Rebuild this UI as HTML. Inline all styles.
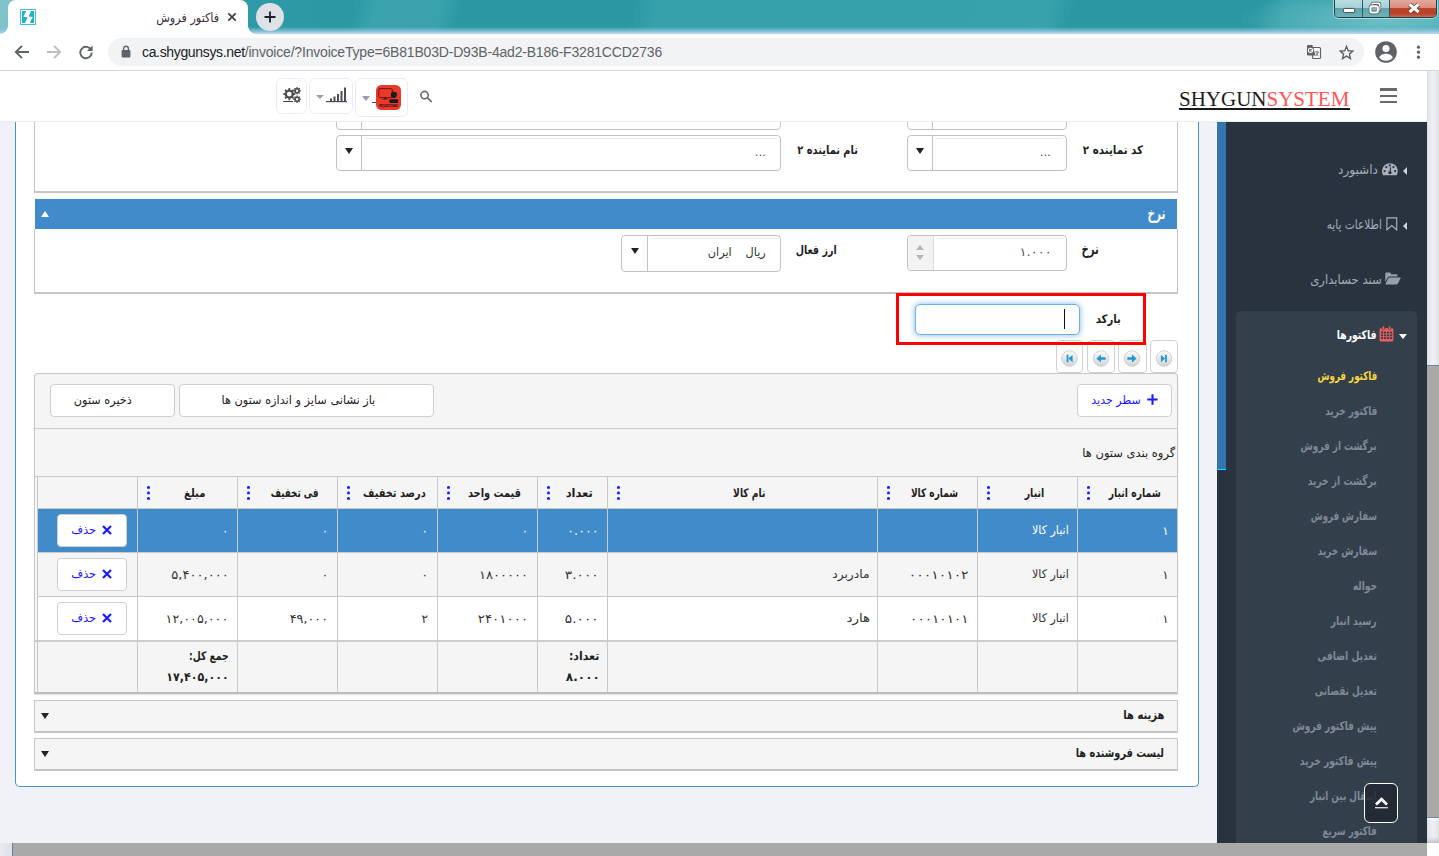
<!DOCTYPE html>
<html lang="fa">
<head>
<meta charset="utf-8">
<title>فاکتور فروش</title>
<style>
*{box-sizing:border-box;margin:0;padding:0}
html,body{width:1439px;height:856px;overflow:hidden;background:#fff}
body{position:relative;font-family:"Liberation Sans","DejaVu Sans",sans-serif;font-size:12px;color:#222}
.abs{position:absolute}
.fa{font-family:"DejaVu Sans","Liberation Sans",sans-serif;direction:rtl;white-space:nowrap;line-height:1}
.fac{font-family:"DejaVu Sans Condensed","DejaVu Sans","Liberation Sans",sans-serif;direction:rtl;white-space:nowrap;line-height:1}
.b{font-weight:bold}

/* ---------- browser chrome ---------- */
#tabstrip{left:0;top:0;width:1439px;height:34px;background:
 linear-gradient(to bottom,rgba(255,255,255,0) 0,rgba(255,255,255,0) 27px,rgba(150,200,225,.75) 31px,rgba(184,214,238,.98) 33.5px),
 radial-gradient(ellipse 150px 30px at 1385px 20px,rgba(150,212,216,.55) 0,rgba(150,212,216,.25) 55%,rgba(150,212,216,0) 100%),
 linear-gradient(104deg,#82c4cb 0,#7fc2c9 12px,#3ea3ad 60px,#2f9ba6 200px,#2b98a3 345px,#3aa3ad 365px,#39a2ac 430px,#2a97a2 450px,#2a97a2 615px,#37a1ab 640px,#38a2ac 1020px,#2a97a2 1045px,#2a97a2 1225px,#39a3ad 1250px,#3ea6b0 1439px);}
#tab{left:8px;top:0;width:240px;height:34px;background:#fff;border-radius:8px 8px 0 0}
#tabl{left:0;top:26px;width:8px;height:8px;background:radial-gradient(circle at 0 0,rgba(255,255,255,0) 7.5px,#fff 8px)}
#tabr{left:248px;top:26px;width:8px;height:8px;background:radial-gradient(circle at 100% 0,rgba(255,255,255,0) 7.5px,#fff 8px)}
#newtab{left:256px;top:3px;width:28px;height:28px;border-radius:50%;background:#dee1e6}
#toolbar{left:0;top:34px;width:1439px;height:36px;background:#fff}
#tbline{left:0;top:70px;width:1439px;height:1px;background:#d5d7dc}
#urlpill{left:108px;top:38px;width:1256px;height:28px;border-radius:14px;background:#f1f3f4}
#url{left:142px;top:43px;font:14px/18px "Liberation Sans",sans-serif;color:#5f6368;white-space:nowrap;letter-spacing:-.193px}
#url b{font-weight:normal;color:#202124;letter-spacing:-.34px}
#wctl{left:1334px;top:0;width:103px;height:18px;border:1px solid #1d4248;border-top:0;border-radius:0 0 5px 5px;overflow:hidden;box-shadow:0 0 0 1px rgba(255,255,255,.45)}
#wctl div{position:absolute;top:0;height:17px}
#wmin{left:0;width:28px;background:linear-gradient(#b9dde0 0,#a5d2d6 45%,#5fa5ac 50%,#6fb2b8 100%);border-right:1px solid #2b5b62}
#wmax{left:28px;width:27px;background:linear-gradient(#b9dde0 0,#a5d2d6 45%,#5fa5ac 50%,#6fb2b8 100%);border-right:1px solid #2b5b62}
#wcls{left:55px;width:47px;background:linear-gradient(#e3a99c 0,#d98e7f 45%,#c0432a 50%,#b8422c 80%,#c96a4f 100%)}

/* ---------- page ---------- */
#page{left:0;top:71px;width:1427px;height:772px;background:#f1f2f7;overflow:hidden}
#hdr{left:0;top:0;width:1427px;height:51px;background:#fff;border-bottom:1px solid #ececf4}
#logo{left:1179px;top:16px;font:21px/24px "Liberation Serif",serif;color:#1b1b1b;white-space:nowrap;letter-spacing:0}
#logo i{font-style:normal;color:#ff5656}
#logou{left:1179px;top:37px;width:171px;height:2px;background:#1b1b1b}
.hbar{left:1380px;width:17px;height:2.5px;background:#6a6a6a}
.tbtn{border:1.3px solid #ebecf9;border-radius:6px;background:#fff}

/* sidebar */
#side{left:1226px;top:51px;width:201px;height:721px;background:#28333f}
#stripe{left:1217px;top:51px;width:9px;height:347px;background:#3276b1}
#stripe2{left:1217px;top:398px;width:9px;height:1.4px;background:#06e4fb}
#stripe3{left:1217px;top:399.4px;width:9px;height:373px;background:#27323e}
#sub{left:10px;top:189px;width:181px;height:540px;background:#343f4c;border-radius:5px 5px 0 0}
.mi{color:#a2abb7;font-size:13px}
.si{color:#7f8997;font-size:12px;font-weight:bold}

/* card */
#card{background:#fff;border:1px solid #4a90d2;border-top:0;border-radius:0 0 5px 5px}
.panel{border:1px solid #c5c5c5;background:#fff}
.combo{border:1px solid #c2c2c2;border-radius:4px;background:#fff}
.combo .dv{position:absolute;top:0;bottom:0;width:1px;background:#c2c2c2}
.tri-d{width:0;height:0;border-left:4px solid transparent;border-right:4px solid transparent;border-top:6px solid #222}
.tri-u{width:0;height:0;border-left:4px solid transparent;border-right:4px solid transparent;border-bottom:6px solid #fff}
.lbl{font-weight:bold;color:#1f1f1f;font-size:12px}
.btn{border:1px solid #cfcfcf;border-radius:4px;background:#fff}
.blue{color:#1a1aff !important}
.hd{font-weight:bold;color:#1f1f1f;font-size:12px}
.cell{font-size:12px;color:#333}
.vl{width:1px;background:#c9c9c9}
.hl{height:1px;background:#c9c9c9}
.dots{width:3px;height:14px;background:radial-gradient(circle at 1.5px 1.5px,#1a1aff 1.2px,rgba(26,26,255,0) 1.65px) 0 0/3px 5.5px repeat-y}
</style>
</head>
<body>

<!-- ================= BROWSER CHROME ================= -->
<div class="abs" id="tabstrip"></div>
<div class="abs" id="tabl"></div><div class="abs" id="tab"></div><div class="abs" id="tabr"></div>
<!-- favicon -->
<svg class="abs" style="left:20px;top:9px" width="16" height="16" viewBox="0 0 16 16"><rect x=".5" y=".5" width="15" height="15" fill="#fff" stroke="#45c0d0"/><rect x="2" y="2" width="12" height="12" fill="#22b0c4"/><path d="M6.2 2 L11 2 L8.6 7.5 L12.8 7.9 L9.8 14 L4.9 14 L7.7 8.4 L3.4 7.7 Z" fill="#fff"/></svg>
<div class="abs fa" id="tabtitle" style="right:1220px;top:10px;font-size:12.5px;line-height:16px;color:#3b2f3f;transform:scaleX(0.8980);transform-origin:100% 50%">فاکتور فروش</div>
<svg class="abs" style="left:227px;top:12px" width="10" height="10" viewBox="0 0 10 10"><path d="M1.3 1.3 L8.7 8.7 M8.7 1.3 L1.3 8.7" stroke="#3c4043" stroke-width="1.7" fill="none"/></svg>
<div class="abs" id="newtab"></div>
<svg class="abs" style="left:264px;top:11px" width="12" height="12" viewBox="0 0 12 12"><path d="M6 .5 V11.5 M.5 6 H11.5" stroke="#202124" stroke-width="1.8" fill="none"/></svg>
<!-- window controls -->
<div class="abs" id="wctl"><div id="wmin"></div><div id="wmax"></div><div id="wcls"></div></div>
<svg class="abs" style="left:1334px;top:0" width="103" height="18" viewBox="0 0 103 18">
 <rect x="9.6" y="8.4" width="11" height="4.2" rx=".8" fill="#fff" stroke="#4a4a5a" stroke-width="1"/>
 <rect x="38.2" y="3.4" width="7.4" height="6.6" rx="1" fill="none" stroke="#4a4a5a" stroke-width="3.2"/><rect x="38.2" y="3.4" width="7.4" height="6.6" rx="1" fill="none" stroke="#fff" stroke-width="1.9"/>
 <rect x="36.5" y="6.3" width="7.2" height="6.2" rx="1" fill="#7fb9bf" stroke="#4a4a5a" stroke-width="3.4"/><rect x="36.5" y="6.3" width="7.2" height="6.2" rx="1" fill="none" stroke="#fff" stroke-width="2.2"/>
 <path d="M75.6 4.4 L84.6 12 M84.6 4.4 L75.6 12" stroke="#5a3a3a" stroke-width="4.6" fill="none"/><path d="M75.6 4.4 L84.6 12 M84.6 4.4 L75.6 12" stroke="#fff" stroke-width="3.1" fill="none"/>
</svg>

<div class="abs" id="toolbar"></div>
<div class="abs" id="tbline"></div>
<!-- nav arrows -->
<svg class="abs" style="left:14px;top:44px" width="16" height="16" viewBox="0 0 16 16"><path d="M15 8 H2.5 M8 1.8 L1.8 8 L8 14.2" stroke="#5f6368" stroke-width="1.9" fill="none"/></svg>
<svg class="abs" style="left:46px;top:44px" width="16" height="16" viewBox="0 0 16 16"><path d="M1 8 H13.5 M8 1.8 L14.2 8 L8 14.2" stroke="#bdbfc2" stroke-width="1.9" fill="none"/></svg>
<svg class="abs" style="left:78px;top:44px" width="16" height="16" viewBox="0 0 16 16"><path d="M13.2 6.2 A5.7 5.7 0 1 0 13.7 8.6" stroke="#5f6368" stroke-width="1.9" fill="none"/><path d="M14.6 1.4 V7 H9 Z" fill="#5f6368"/></svg>
<div class="abs" id="urlpill"></div>
<!-- lock -->
<svg class="abs" style="left:121px;top:45px" width="10" height="13" viewBox="0 0 10 13"><rect x=".6" y="5" width="8.8" height="7.4" rx="1" fill="#5f6368"/><path d="M2.6 5.4 V3.6 A2.4 2.4 0 0 1 7.4 3.6 V5.4" stroke="#5f6368" stroke-width="1.4" fill="none"/></svg>
<div class="abs" id="url"><b>ca.shygunsys.net</b>/invoice/?InvoiceType=6B81B03D-D93B-4ad2-B186-F3281CCD2736</div>
<!-- translate icon -->
<svg class="abs" style="left:1306px;top:44px" width="16" height="16" viewBox="0 0 16 16"><rect x="6.5" y="3.5" width="8" height="11" rx="1" fill="#fff" stroke="#5f6368" stroke-width="1.2"/><path d="M9 8 H13 M11 7 V8 M9.5 12 L12.5 8.2 M10 9.5 L12.6 12" stroke="#5f6368" stroke-width=".9" fill="none"/><path d="M2 1 H6.4 L9.6 11.6 H2 A1 1 0 0 1 1 10.6 V2 A1 1 0 0 1 2 1 Z" fill="#5f6368"/><circle cx="4.5" cy="6.3" r="2.1" fill="none" stroke="#fff" stroke-width="1.1"/><path d="M4.6 6.4 H6.6" stroke="#fff" stroke-width=".9"/></svg>
<!-- star -->
<svg class="abs" style="left:1338.6px;top:44.6px" width="15" height="15" viewBox="0 0 16 16"><path d="M8 1.6 L9.9 6.1 L14.8 6.5 L11.1 9.7 L12.2 14.5 L8 11.9 L3.8 14.5 L4.9 9.7 L1.2 6.5 L6.1 6.1 Z" fill="none" stroke="#5f6368" stroke-width="1.5" stroke-linejoin="miter"/></svg>
<!-- profile -->
<svg class="abs" style="left:1375px;top:41px" width="22" height="22" viewBox="0 0 22 22"><circle cx="11" cy="11" r="10.8" fill="#5f6368"/><circle cx="11" cy="7.6" r="3.5" fill="#fff"/><path d="M4.2 16.6 C5.4 13.6 8.4 12.8 11 12.8 C13.6 12.8 16.6 13.6 17.8 16.6 C16.2 18.7 13.8 19.8 11 19.8 C8.2 19.8 5.8 18.7 4.2 16.6 Z" fill="#fff"/></svg>
<svg class="abs" style="left:1416px;top:45px" width="5" height="15" viewBox="0 0 5 15"><circle cx="2.5" cy="2.2" r="1.6" fill="#5f6368"/><circle cx="2.5" cy="7.2" r="1.6" fill="#5f6368"/><circle cx="2.5" cy="12.2" r="1.6" fill="#5f6368"/></svg>

<!-- ================= PAGE ================= -->
<div class="abs" id="page">
<!-- ============ main content (coords: x=X, y=Y-122) ============ -->
<div class="abs" id="content" style="left:0;top:51px;width:1217px;height:721px;overflow:hidden">
 <div class="abs" id="card" style="left:15px;top:-10px;width:1184px;height:675px"></div>

 <!-- panel 1 (scrolled, partially visible) -->
 <div class="abs panel" id="p1" style="left:34px;top:-20px;width:1144px;height:91px;border-bottom:2px solid #c6c6c6"></div>
 <div class="abs combo" style="left:907px;top:-20px;width:160px;height:28px"><div class="dv" style="left:24px"></div></div>
 <div class="abs combo" style="left:336px;top:-20px;width:445px;height:28px"><div class="dv" style="left:24px"></div></div>
 <div class="abs combo" id="cb1" style="left:907px;top:13px;width:160px;height:36px"><div class="dv" style="left:24px"></div><div class="abs tri-d" style="left:8px;top:12px"></div><div class="abs" style="left:28px;top:2px;right:3px;height:1px;background:#ececec"></div></div>
 <div class="abs combo" id="cb2" style="left:336px;top:13px;width:445px;height:36px"><div class="dv" style="left:24px"></div><div class="abs tri-d" style="left:8px;top:12px"></div><div class="abs" style="left:28px;top:2px;right:3px;height:1px;background:#ececec"></div></div>
 <div class="abs" id="d1" style="left:1040px;top:23px;font:12px/14px 'Liberation Sans',sans-serif;color:#444;letter-spacing:.3px">...</div>
 <div class="abs" id="d2" style="left:755px;top:23px;font:12px/14px 'Liberation Sans',sans-serif;color:#444;letter-spacing:.3px">...</div>
 <div class="abs fa lbl" id="L1" style="right:74px;top:22px;transform:scaleX(0.8605);transform-origin:100% 50%">کد نماینده ۲</div>
 <div class="abs fa lbl" id="L2" style="right:359px;top:22px;transform:scaleX(0.8206);transform-origin:100% 50%">نام نماینده ۲</div>

 <!-- panel 2 : rate -->
 <div class="abs" id="bh" style="left:35px;top:77px;width:1142px;height:30px;background:#428bca"></div>
 <div class="abs tri-u" style="left:41px;top:89px"></div>
 <div class="abs fa b" id="L3" style="right:52px;top:84px;font-size:16px;color:#fff;transform:scaleX(0.6545);transform-origin:100% 50%">نرخ</div>
 <div class="abs panel" id="p2" style="left:34px;top:107px;width:1144px;height:65px;border-top:0;border-bottom:2px solid #c6c6c6"></div>
 <div class="abs combo" id="num" style="left:907px;top:113px;width:160px;height:36px;overflow:hidden"><div class="abs" style="left:0;top:0;width:25px;height:34px;background:#f3f3f3"></div><div class="dv" style="left:25px;background:#dcdcdc"></div>
   <div class="abs" style="left:8px;top:9px;width:0;height:0;border-left:4px solid transparent;border-right:4px solid transparent;border-bottom:5px solid #b5b5b5"></div>
   <div class="abs" style="left:8px;top:19px;width:0;height:0;border-left:4px solid transparent;border-right:4px solid transparent;border-top:5px solid #b5b5b5"></div>
   <div class="abs" style="left:29px;top:2px;right:3px;height:1px;background:#ececec"></div></div>
 <div class="abs fa cell" id="T1" style="right:165px;top:124px;color:#555;transform:scaleX(1.0807);transform-origin:100% 50%">۱.۰۰۰</div>
 <div class="abs fa lbl" id="L4" style="right:118px;top:120px;font-size:15px;transform:scaleX(0.6672);transform-origin:100% 50%">نرخ</div>
 <div class="abs fa lbl" id="L5" style="right:380px;top:122px;transform:scaleX(0.7937);transform-origin:100% 50%">ارز فعال</div>
 <div class="abs combo" id="cb3" style="left:621px;top:113px;width:160px;height:37px"><div class="dv" style="left:25px"></div><div class="abs tri-d" style="left:9px;top:12px"></div><div class="abs" style="left:30px;top:2px;right:3px;height:1px;background:#ececec"></div></div>
 <div class="abs fa cell" id="T2" style="right:451px;top:124px;color:#333;word-spacing:11px;transform:scaleX(0.9390);transform-origin:100% 50%">ریال  ایران</div>

 <!-- nav buttons (under red box) -->
 <div class="abs btn" style="left:1056px;top:218px;width:27px;height:33px;border-color:#d2d2d2"></div>
 <div class="abs btn" style="left:1087px;top:218px;width:28px;height:33px;border-color:#d2d2d2"></div>
 <div class="abs btn" style="left:1118px;top:218px;width:29px;height:33px;border-color:#d2d2d2"></div>
 <div class="abs btn" style="left:1150px;top:218px;width:28px;height:33px;border-color:#d2d2d2"></div>
 <svg class="abs" style="left:1061px;top:228px" width="112" height="17" viewBox="0 0 112 17">
  <defs><linearGradient id="cg" x1="0" y1="0" x2="0" y2="1"><stop offset="0" stop-color="#fbfbfb"/><stop offset="1" stop-color="#d4d4d4"/></linearGradient></defs>
  <g stroke="#c8c8c8" stroke-width=".8" fill="url(#cg)"><circle cx="8.5" cy="8.5" r="7.8"/><circle cx="40" cy="8.5" r="7.8"/><circle cx="71" cy="8.5" r="7.8"/><circle cx="103" cy="8.5" r="7.8"/></g>
  <g fill="#1e9ad6"><path d="M5.6 4.8 H7.4 V12.2 H5.6 Z M7.4 8.5 L11.6 4.8 V12.2 Z"/>
   <path d="M35.4 8.5 L40 4.4 V7.2 H44.6 V9.8 H40 V12.6 Z"/>
   <path d="M75.6 8.5 L71 4.4 V7.2 H66.4 V9.8 H71 V12.6 Z"/>
   <path d="M105.9 4.8 H104.1 V12.2 H105.9 Z M104.1 8.5 L99.9 4.8 V12.2 Z"/></g>
 </svg>
 <!-- barcode -->
 <div class="abs" id="redbox" style="left:896px;top:171px;width:250px;height:52px;border:3px solid #f00;background:transparent"></div>
 <div class="abs" id="bc" style="left:915px;top:182px;width:165px;height:31px;border:1px solid #6fb1e6;border-radius:5px;background:#fff;box-shadow:0 0 5px 1px rgba(102,175,233,.65)"></div>
 <div class="abs" style="left:1064px;top:187px;width:1px;height:20px;background:#111"></div>
 <div class="abs fa lbl" id="L6" style="right:96px;top:191px;transform:scaleX(0.8410);transform-origin:100% 50%">بارکد</div>

 <!-- ============ grid ============ -->
 <div class="abs" id="grid" style="left:34px;top:251px;width:1144px;height:321px;background:#f5f5f5;border:1px solid #c7c7c7;border-bottom:2px solid #bdbdbd;border-radius:4px 4px 0 0;box-shadow:0 1px 1px rgba(0,0,0,.12)"></div>
 <!-- toolbar buttons -->
 <div class="abs btn" id="gb1" style="left:50px;top:262px;width:125px;height:33px"></div>
 <div class="abs btn" id="gb2" style="left:179px;top:262px;width:255px;height:33px"></div>
 <div class="abs btn" id="gb3" style="left:1077px;top:262px;width:95px;height:33px"></div>
 <div class="abs fa cell" id="G1" style="right:1085px;top:272px;color:#222;transform:scaleX(0.9386);transform-origin:100% 50%">ذخیره ستون</div>
 <div class="abs fa cell" id="G2" style="right:842px;top:272px;color:#222;transform:scaleX(0.9415);transform-origin:100% 50%">باز نشانی سایز و اندازه ستون ها</div>
 <div class="abs fa cell blue" id="G3" style="right:76px;top:272px;transform:scaleX(0.9199);transform-origin:100% 50%">سطر جدید</div>
 <svg class="abs" style="left:1147px;top:272px" width="11" height="11" viewBox="0 0 11 11"><path d="M5.5 .3 V10.7 M.3 5.5 H10.7" stroke="#1a1aff" stroke-width="2.1"/></svg>
 <div class="abs hl" style="left:35px;top:306px;width:1142px"></div>
 <div class="abs fa cell" id="G4" style="right:42px;top:325px;color:#222;transform:scaleX(0.9559);transform-origin:100% 50%">گروه بندی ستون ها</div>
 <div class="abs hl" style="left:35px;top:354px;width:1142px"></div>
 <div class="abs" style="left:38px;top:387px;width:1139px;height:43px;background:#428bca"></div>
 <div class="abs" style="left:38px;top:431px;width:1139px;height:43px;background:#f5f5f5"></div>
 <div class="abs" style="left:38px;top:475px;width:1139px;height:43px;background:#fff"></div>
 <div class="abs" style="left:38px;top:520px;width:1139px;height:50px;background:#f5f5f5"></div>
 <div class="abs hl" style="left:38px;top:386px;width:1139px"></div>
 <div class="abs hl" style="left:38px;top:430px;width:1139px"></div>
 <div class="abs hl" style="left:38px;top:474px;width:1139px"></div>
 <div class="abs hl" style="left:35px;top:518px;width:1143px;height:2px;background:#cdcdcd"></div>
 <div class="abs vl" style="left:37px;top:355px;height:215px"></div>
 <div class="abs vl" style="left:137px;top:355px;height:215px"></div>
 <div class="abs vl" style="left:237px;top:355px;height:215px"></div>
 <div class="abs vl" style="left:337px;top:355px;height:215px"></div>
 <div class="abs vl" style="left:437px;top:355px;height:215px"></div>
 <div class="abs vl" style="left:537px;top:355px;height:215px"></div>
 <div class="abs vl" style="left:607px;top:355px;height:215px"></div>
 <div class="abs vl" style="left:877px;top:355px;height:215px"></div>
 <div class="abs vl" style="left:977px;top:355px;height:215px"></div>
 <div class="abs vl" style="left:1077px;top:355px;height:215px"></div>
 <div class="abs dots" style="left:1086.6px;top:364px"></div>
 <div class="abs fa hd" id="H9" style="top:365px;left:1100.8px;transform:scaleX(0.7709);transform-origin:50% 50%">شماره انبار</div>
 <div class="abs dots" style="left:986.6px;top:364px"></div>
 <div class="abs fa hd" id="H8" style="top:365px;left:1022.0px;transform:scaleX(0.7820);transform-origin:50% 50%">انبار</div>
 <div class="abs dots" style="left:886.6px;top:364px"></div>
 <div class="abs fa hd" id="H7" style="top:365px;left:903.0px;transform:scaleX(0.7482);transform-origin:50% 50%">شماره کالا</div>
 <div class="abs dots" style="left:616.6px;top:364px"></div>
 <div class="abs fa hd" id="H6" style="top:365px;left:728.3px;transform:scaleX(0.7593);transform-origin:50% 50%">نام کالا</div>
 <div class="abs dots" style="left:546.6px;top:364px"></div>
 <div class="abs fa hd" id="H5" style="top:365px;left:565.3px;transform:scaleX(0.9549);transform-origin:50% 50%">تعداد</div>
 <div class="abs dots" style="left:446.6px;top:364px"></div>
 <div class="abs fa hd" id="H4" style="top:365px;left:462.1px;transform:scaleX(0.8173);transform-origin:50% 50%">قیمت واحد</div>
 <div class="abs dots" style="left:346.6px;top:364px"></div>
 <div class="abs fa hd" id="H3" style="top:365px;left:356.1px;transform:scaleX(0.8168);transform-origin:50% 50%">درصد تخفیف</div>
 <div class="abs dots" style="left:246.6px;top:364px"></div>
 <div class="abs fa hd" id="H2" style="top:365px;left:261.9px;transform:scaleX(0.7321);transform-origin:50% 50%">فی تخفیف</div>
 <div class="abs dots" style="left:146.6px;top:364px"></div>
 <div class="abs fa hd" id="H1" style="top:365px;left:181.8px;transform:scaleX(0.8413);transform-origin:50% 50%">مبلغ</div>
 <div class="abs fa cell" id="R0C9" style="right:48.2px;top:403px;color:#fff">۱</div>
 <div class="abs fa cell" id="R0C8" style="right:148.4px;top:402px;color:#fff;transform:scaleX(0.9251);transform-origin:100% 50%">انبار کالا</div>
 <div class="abs fa cell" id="R0C5" style="right:618.3px;top:403px;color:#fff;transform:scaleX(1.0571);transform-origin:100% 50%">۰.۰۰۰</div>
 <div class="abs fa cell" id="R0C4" style="right:688.8px;top:403px;color:#fff">۰</div>
 <div class="abs fa cell" id="R0C3" style="right:789.0px;top:403px;color:#fff">۰</div>
 <div class="abs fa cell" id="R0C2" style="right:888.7px;top:403px;color:#fff">۰</div>
 <div class="abs fa cell" id="R0C1" style="right:988.5px;top:403px;color:#fff">۰</div>
 <div class="abs btn" style="left:57px;top:392px;width:70px;height:33px"></div>
 <div class="abs fa cell blue" id="D0" style="right:1120.5px;top:402px;transform:scaleX(0.9481);transform-origin:100% 50%">حذف</div>
 <svg class="abs" style="left:102px;top:403px" width="10" height="10" viewBox="0 0 10 10"><path d="M1 1 L9 9 M9 1 L1 9" stroke="#1a1aff" stroke-width="2.2"/></svg>
 <div class="abs fa cell" id="R1C9" style="right:48.2px;top:447px;color:#333">۱</div>
 <div class="abs fa cell" id="R1C8" style="right:148.4px;top:446px;color:#333;transform:scaleX(0.9251);transform-origin:100% 50%">انبار کالا</div>
 <div class="abs fa cell" id="R1C7" style="right:248.3px;top:447px;color:#333;transform:scaleX(1.1578);transform-origin:100% 50%">۰۰۰۱۰۱۰۲</div>
 <div class="abs fa cell" id="R1C6" style="right:347.0px;top:446px;color:#333;transform:scaleX(1.0210);transform-origin:100% 50%">مادربرد</div>
 <div class="abs fa cell" id="R1C5" style="right:618.3px;top:447px;color:#333;transform:scaleX(1.1415);transform-origin:100% 50%">۳.۰۰۰</div>
 <div class="abs fa cell" id="R1C4" style="right:688.8px;top:447px;color:#333;transform:scaleX(1.0903);transform-origin:100% 50%">۱۸۰۰۰۰۰</div>
 <div class="abs fa cell" id="R1C3" style="right:789.0px;top:447px;color:#333">۰</div>
 <div class="abs fa cell" id="R1C2" style="right:888.7px;top:447px;color:#333">۰</div>
 <div class="abs fa cell" id="R1C1" style="right:988.5px;top:447px;color:#333;transform:scaleX(1.0900);transform-origin:100% 50%">۵,۴۰۰,۰۰۰</div>
 <div class="abs btn" style="left:57px;top:436px;width:70px;height:33px"></div>
 <div class="abs fa cell blue" id="D1" style="right:1120.5px;top:446px;transform:scaleX(0.9481);transform-origin:100% 50%">حذف</div>
 <svg class="abs" style="left:102px;top:447px" width="10" height="10" viewBox="0 0 10 10"><path d="M1 1 L9 9 M9 1 L1 9" stroke="#1a1aff" stroke-width="2.2"/></svg>
 <div class="abs fa cell" id="R2C9" style="right:48.2px;top:491px;color:#333">۱</div>
 <div class="abs fa cell" id="R2C8" style="right:148.4px;top:490px;color:#333;transform:scaleX(0.9251);transform-origin:100% 50%">انبار کالا</div>
 <div class="abs fa cell" id="R2C7" style="right:248.3px;top:491px;color:#333;transform:scaleX(1.1345);transform-origin:100% 50%">۰۰۰۱۰۱۰۱</div>
 <div class="abs fa cell" id="R2C6" style="right:347.0px;top:490px;color:#333;transform:scaleX(1.1172);transform-origin:100% 50%">هارد</div>
 <div class="abs fa cell" id="R2C5" style="right:618.3px;top:491px;color:#333;transform:scaleX(1.1415);transform-origin:100% 50%">۵.۰۰۰</div>
 <div class="abs fa cell" id="R2C4" style="right:688.8px;top:491px;color:#333;transform:scaleX(1.1169);transform-origin:100% 50%">۲۴۰۱۰۰۰</div>
 <div class="abs fa cell" id="R2C3" style="right:789.0px;top:491px;color:#333">۲</div>
 <div class="abs fa cell" id="R2C2" style="right:888.7px;top:491px;color:#333;transform:scaleX(1.0653);transform-origin:100% 50%">۴۹,۰۰۰</div>
 <div class="abs fa cell" id="R2C1" style="right:988.5px;top:491px;color:#333;transform:scaleX(1.0574);transform-origin:100% 50%">۱۲,۰۰۵,۰۰۰</div>
 <div class="abs btn" style="left:57px;top:480px;width:70px;height:33px"></div>
 <div class="abs fa cell blue" id="D2" style="right:1120.5px;top:490px;transform:scaleX(0.9481);transform-origin:100% 50%">حذف</div>
 <svg class="abs" style="left:102px;top:491px" width="10" height="10" viewBox="0 0 10 10"><path d="M1 1 L9 9 M9 1 L1 9" stroke="#1a1aff" stroke-width="2.2"/></svg>
 <div class="abs fa hd" id="F1" style="right:617.4px;top:528px;transform:scaleX(0.9134);transform-origin:100% 50%">تعداد:</div>
 <div class="abs fa hd" id="F2" style="right:617.4px;top:549px;transform:scaleX(1.0042);transform-origin:100% 50%">۸.۰۰۰</div>
 <div class="abs fa hd" id="F3" style="right:988.5px;top:528px;transform:scaleX(0.7661);transform-origin:100% 50%">جمع کل:</div>
 <div class="abs fa hd" id="F4" style="right:988.5px;top:549px;transform:scaleX(0.9229);transform-origin:100% 50%">۱۷,۴۰۵,۰۰۰</div>
 <!-- collapsible sections -->
 <div class="abs" id="sec1" style="left:34px;top:578px;width:1144px;height:33px;background:#f5f5f5;border:1px solid #c7c7c7;border-bottom:2px solid #c4c4c4"></div>
 <div class="abs tri-d" style="left:41px;top:591px"></div>
 <div class="abs fa lbl" id="S1" style="right:53px;top:587px;transform:scaleX(0.8346);transform-origin:100% 50%">هزینه ها</div>
 <div class="abs" id="sec2" style="left:34px;top:616px;width:1144px;height:33px;background:#f5f5f5;border:1px solid #c7c7c7;border-bottom:2px solid #c4c4c4"></div>
 <div class="abs tri-d" style="left:41px;top:629px"></div>
 <div class="abs fa lbl" id="S2" style="right:53px;top:625px;transform:scaleX(0.8101);transform-origin:100% 50%">لیست فروشنده ها</div>
</div>

<!-- header -->
<div class="abs" id="hdr"></div>
<div class="abs" id="logo">SHYGUN<i>SYSTEM</i></div>
<div class="abs" id="logou"></div>
<div class="abs hbar" style="top:17.4px"></div><div class="abs hbar" style="top:23.6px"></div><div class="abs hbar" style="top:29.7px"></div>
<!-- header toolbar buttons -->
<div class="abs tbtn" id="tb1" style="left:276px;top:7px;width:31px;height:36px"></div>
<div class="abs tbtn" id="tb2" style="left:309px;top:7px;width:44px;height:36px"></div>
<div class="abs tbtn" id="tb3" style="left:355px;top:7px;width:53px;height:39px"></div>
<!-- cogs icon -->
<svg class="abs" id="cogs" style="left:282px;top:15.8px" width="19" height="17" viewBox="0 0 19 17">
 <g fill="#4d4d4d">
  <path d="M6.6 1 L8 1 L8.4 2.7 L9.6 3.2 L11.1 2.3 L12.1 3.3 L11.2 4.8 L11.7 6 L13.4 6.4 L13.4 7.8 L11.7 8.2 L11.2 9.4 L12.1 10.9 L11.1 11.9 L9.6 11 L8.4 11.5 L8 13.2 L6.6 13.2 L6.2 11.5 L5 11 L3.5 11.9 L2.5 10.9 L3.4 9.4 L2.9 8.2 L1.2 7.8 L1.2 6.4 L2.9 6 L3.4 4.8 L2.5 3.3 L3.5 2.3 L5 3.2 L6.2 2.7 Z M7.3 4.7 A2.4 2.4 0 1 0 7.3 9.5 A2.4 2.4 0 1 0 7.3 4.7 Z" fill-rule="evenodd"/>
  <path d="M14.6 0 L15.6 0 L15.8 1 L16.5 1.3 L17.4 .8 L18.1 1.5 L17.6 2.4 L17.9 3.1 L18.9 3.3 L18.9 4.3 L17.9 4.5 L17.6 5.2 L18.1 6.1 L17.4 6.8 L16.5 6.3 L15.8 6.6 L15.6 7.6 L14.6 7.6 L14.4 6.6 L13.7 6.3 L12.8 6.8 L12.1 6.1 L12.6 5.2 L12.3 4.5 L11.3 4.3 L11.3 3.3 L12.3 3.1 L12.6 2.4 L12.1 1.5 L12.8 .8 L13.7 1.3 L14.4 1 Z M15.1 2.6 A1.2 1.2 0 1 0 15.1 5 A1.2 1.2 0 1 0 15.1 2.6 Z" fill-rule="evenodd"/>
  <path d="M14.6 8.4 L15.6 8.4 L15.8 9.4 L16.5 9.7 L17.4 9.2 L18.1 9.9 L17.6 10.8 L17.9 11.5 L18.9 11.7 L18.9 12.7 L17.9 12.9 L17.6 13.6 L18.1 14.5 L17.4 15.2 L16.5 14.7 L15.8 15 L15.6 16 L14.6 16 L14.4 15 L13.7 14.7 L12.8 15.2 L12.1 14.5 L12.6 13.6 L12.3 12.9 L11.3 12.7 L11.3 11.7 L12.3 11.5 L12.6 10.8 L12.1 9.9 L12.8 9.2 L13.7 9.7 L14.4 9.4 Z M15.1 11 A1.2 1.2 0 1 0 15.1 13.4 A1.2 1.2 0 1 0 15.1 11 Z" fill-rule="evenodd"/>
  <rect x="1.2" y="14" width="9.7" height="1" fill="#3a3a3a"/>
 </g>
</svg>
<!-- signal icon + caret -->
<div class="abs" style="left:316px;top:23.7px;width:0;height:0;border-left:4px solid transparent;border-right:4px solid transparent;border-top:4.5px solid #9a9cb4"></div>
<svg class="abs" id="sig" style="left:326px;top:16px" width="21" height="16" viewBox="0 0 21 16"><g fill="#4d4d5a"><rect x="4" y="11.5" width="2" height="2.5"/><rect x="7.5" y="9.5" width="2" height="4.5"/><rect x="11" y="7" width="2" height="7"/><rect x="14.5" y="4" width="2" height="10"/><rect x="18" y=".5" width="2" height="13.5"/><rect x="0" y="14" width="21" height="1.2"/></g></svg>
<!-- user button -->
<div class="abs" style="left:362px;top:25px;width:0;height:0;border-left:4px solid transparent;border-right:4px solid transparent;border-top:5px solid #9a9cb4"></div>
<div class="abs" style="left:372px;top:31px;width:6px;height:1px;background:#444"></div>
<svg class="abs" id="usr" style="left:376px;top:14px" width="25" height="25" viewBox="0 0 25 25"><rect width="25" height="25" rx="5.5" fill="#ea382b"/><rect x="2.7" y="3.6" width="13.6" height="9" rx="1.2" fill="none" stroke="#4a120e" stroke-width=".8"/><path d="M6.2 14.4 H11.8" stroke="#4a120e" stroke-width=".5"/><rect x="8" y="12.8" width="2.4" height="1.1" fill="#1a1a1a"/><circle cx="17.9" cy="9.8" r="3.1" fill="#1c1a1c"/><rect x="13.3" y="14.2" width="8.8" height="3.7" rx="1" fill="#1c1a1c"/><text x="12.6" y="21.9" font-family="Liberation Sans, sans-serif" font-weight="bold" font-size="2.7" text-anchor="middle" textLength="19" fill="#3a0d0a">REQUEST DEMO</text></svg>
<!-- search -->
<svg class="abs" id="srch" style="left:419.2px;top:19px" width="14" height="14" viewBox="0 0 14 14"><circle cx="5.6" cy="5.1" r="3.7" fill="none" stroke="#70707a" stroke-width="1.7"/><path d="M8.4 7.9 L12.2 11.4" stroke="#70707a" stroke-width="1.9" stroke-linecap="round"/></svg>

<!-- ============ sidebar ============ -->
<div class="abs" id="stripe"></div><div class="abs" id="stripe2"></div><div class="abs" id="stripe3"></div>
<div class="abs" id="side">
 <div class="abs" id="sub"></div>
 <!-- coordinates inside #side: x = X-1226, y = Y-122 -->
 <!-- dashboard -->
 <div class="abs" style="left:177px;top:45px;width:0;height:0;border-top:4px solid transparent;border-bottom:4px solid transparent;border-right:4.4px solid #cfd2d6"></div>
 <svg class="abs" style="left:155.8px;top:40.9px" width="16" height="13" viewBox="0 0 16 13"><path d="M1.2 12.3 A7.9 7.9 0 1 1 14.6 12.3 Z" fill="#a9b1bd"/><g fill="#28333f"><circle cx="2.6" cy="8.1" r="1.1"/><circle cx="4.3" cy="4.1" r="1.1"/><circle cx="7.8" cy="2.4" r="1.1"/><circle cx="11.4" cy="4.1" r="1.1"/><circle cx="13.2" cy="8.1" r="1.1"/><circle cx="7.9" cy="9.6" r="1.7"/><path d="M7.5 9.4 L8.1 4.3 L9.1 4.4 L8.7 9.6 Z"/></g></svg>
 <div class="abs fa mi" id="m1" style="right:49px;top:41px;transform:scaleX(0.9302);transform-origin:100% 50%">داشبورد</div>
 <!-- base info -->
 <div class="abs" style="left:177px;top:100px;width:0;height:0;border-top:4px solid transparent;border-bottom:4px solid transparent;border-right:4.4px solid #cfd2d6"></div>
 <svg class="abs" style="left:160px;top:94.6px" width="12" height="14" viewBox="0 0 12 14"><path d="M.9 .8 H10.7 V12.9 L5.8 8.6 L.9 12.9 Z" fill="none" stroke="#a9b1bd" stroke-width="1.15" stroke-linejoin="miter"/></svg>
 <div class="abs fa mi" id="m2" style="right:45px;top:96px;transform:scaleX(0.8134);transform-origin:100% 50%">اطلاعات پایه</div>
 <!-- accounting doc -->
 <svg class="abs" style="left:159px;top:149.8px" width="16" height="13" viewBox="0 0 16 13"><path d="M.3 1.6 Q.3 .6 1.3 .6 H4.8 Q5.6 .6 5.9 1.4 L6.2 2.2 H11.4 Q12.4 2.2 12.4 3.2 V4.4 H4.4 Q3.4 4.4 2.9 5.3 L.3 10 Z" fill="#979faa"/><path d="M4.6 5.4 H15.2 Q16 5.4 15.6 6.2 L12.9 11.6 Q12.5 12.4 11.6 12.4 H1 Q.2 12.4 .6 11.6 L3.3 6.2 Q3.7 5.4 4.6 5.4 Z" fill="#979faa"/></svg>
 <div class="abs fa mi" id="m3" style="right:45px;top:151px;transform:scaleX(0.8977);transform-origin:100% 50%">سند حسابداری</div>
 <!-- invoices (open) -->
 <div class="abs" style="left:173px;top:211.5px;width:0;height:0;border-left:4px solid transparent;border-right:4px solid transparent;border-top:5px solid #fff"></div>
 <svg class="abs" style="left:153px;top:204px" width="15" height="16" viewBox="0 0 15 16"><rect x=".6" y="2.2" width="13.8" height="13.2" rx="1.4" fill="#f0605d"/><rect x="3.2" y="0" width="2.2" height="4" rx="1" fill="#f0605d" stroke="#343f4c" stroke-width=".6"/><rect x="9.6" y="0" width="2.2" height="4" rx="1" fill="#f0605d" stroke="#343f4c" stroke-width=".6"/><g fill="#343f4c"><rect x="2" y="5.6" width="2.2" height="1.9"/><rect x="5" y="5.6" width="2.2" height="1.9"/><rect x="8" y="5.6" width="2.2" height="1.9"/><rect x="11" y="5.6" width="2.2" height="1.9"/><rect x="2" y="8.4" width="2.2" height="1.9"/><rect x="5" y="8.4" width="2.2" height="1.9"/><rect x="8" y="8.4" width="2.2" height="1.9"/><rect x="11" y="8.4" width="2.2" height="1.9"/><rect x="2" y="11.2" width="2.2" height="1.9"/><rect x="5" y="11.2" width="2.2" height="1.9"/><rect x="8" y="11.2" width="2.2" height="1.9"/><rect x="11" y="11.2" width="2.2" height="1.9"/></g></svg>
 <div class="abs fa b" id="m4" style="right:51px;top:207px;color:#fff;font-size:12px;transform:scaleX(0.7709);transform-origin:100% 50%">فاکتورها</div>
 <!-- sub items : right edge X=1377 -> right = 1427-1377 = 50 ; centre Y list -->
 <div class="abs fa si" id="s1" style="right:50px;top:248px;color:#f5d63f;transform:scaleX(0.7262);transform-origin:100% 50%">فاکتور فروش</div>
 <div class="abs fa si" id="s2" style="right:50px;top:283px;transform:scaleX(0.7414);transform-origin:100% 50%">فاکتور خرید</div>
 <div class="abs fa si" id="s3" style="right:50px;top:318px;transform:scaleX(0.7408);transform-origin:100% 50%">برگشت از فروش</div>
 <div class="abs fa si" id="s4" style="right:50px;top:353px;transform:scaleX(0.7610);transform-origin:100% 50%">برگشت از خرید</div>
 <div class="abs fa si" id="s5" style="right:50px;top:388px;transform:scaleX(0.7201);transform-origin:100% 50%">سفارش فروش</div>
 <div class="abs fa si" id="s6" style="right:50px;top:423px;transform:scaleX(0.7399);transform-origin:100% 50%">سفارش خرید</div>
 <div class="abs fa si" id="s7" style="right:50px;top:458px;transform:scaleX(0.7544);transform-origin:100% 50%">حواله</div>
 <div class="abs fa si" id="s8" style="right:50px;top:493px;transform:scaleX(0.7711);transform-origin:100% 50%">رسید انبار</div>
 <div class="abs fa si" id="s9" style="right:50px;top:528px;transform:scaleX(0.7607);transform-origin:100% 50%">تعدیل اضافی</div>
 <div class="abs fa si" id="s10" style="right:50px;top:563px;transform:scaleX(0.7404);transform-origin:100% 50%">تعدیل نقصانی</div>
 <div class="abs fa si" id="s11" style="right:50px;top:598px;transform:scaleX(0.7478);transform-origin:100% 50%">پیش فاکتور فروش</div>
 <div class="abs fa si" id="s12" style="right:50px;top:633px;transform:scaleX(0.7637);transform-origin:100% 50%">پیش فاکتور خرید</div>
 <div class="abs fa si" id="s13" style="right:50px;top:668px;transform:scaleX(0.7354);transform-origin:100% 50%">انتقال بین انبار</div>
 <div class="abs fa si" id="s14" style="right:50px;top:703px;transform:scaleX(0.7270);transform-origin:100% 50%">فاکتور سریع</div>
 <!-- scroll-top button -->
 <div class="abs" id="totop" style="left:138px;top:661px;width:34px;height:40px;background:rgba(33,39,51,.84);border:1.5px solid #fff;border-radius:6px"></div>
 <svg class="abs" style="left:148px;top:675px" width="15" height="12" viewBox="0 0 15 12"><path d="M2 7.4 L7.5 2.2 L13 7.4" stroke="#fff" stroke-width="2.8" fill="none"/><rect x="1" y="10.2" width="13" height="1.1" fill="#fff"/></svg>
</div>

<!--PAGE-CONTENT2-->
</div>

<!-- ================= SCROLLBARS ================= -->
<div class="abs" id="vsb" style="left:1427px;top:71px;width:12px;height:772px;background:linear-gradient(to right,#d9dae1 0,#e6e7ee 12%,#eff0f6 50%,#e9eaf0 80%,#dcdde3 100%)"></div>
<div class="abs" id="vsbb" style="left:1427px;top:818px;width:12px;height:25px;background:linear-gradient(to bottom,rgba(255,255,255,.7) 0,rgba(255,255,255,0) 3px,rgba(255,255,255,0) 19px,rgba(190,191,198,.9) 25px)"></div>
<div class="abs" id="vthumb" style="left:1427px;top:365px;width:12px;height:453px;background:#a9a9a9;border-top:1px solid #6b87a6;border-bottom:1px solid #6b87a6"></div>
<div class="abs" id="hsb" style="left:0;top:843px;width:1427px;height:13px;background:#a9a9a9"></div>
<div class="abs" id="hsbl" style="left:0;top:843px;width:13px;height:13px;background:linear-gradient(to right,#e9eaf0,#dfe0e8);border-right:1px solid #5d7fa8"></div>
<div class="abs" id="corner" style="left:1427px;top:843px;width:12px;height:13px;background:#fff"></div>
</body>
</html>
